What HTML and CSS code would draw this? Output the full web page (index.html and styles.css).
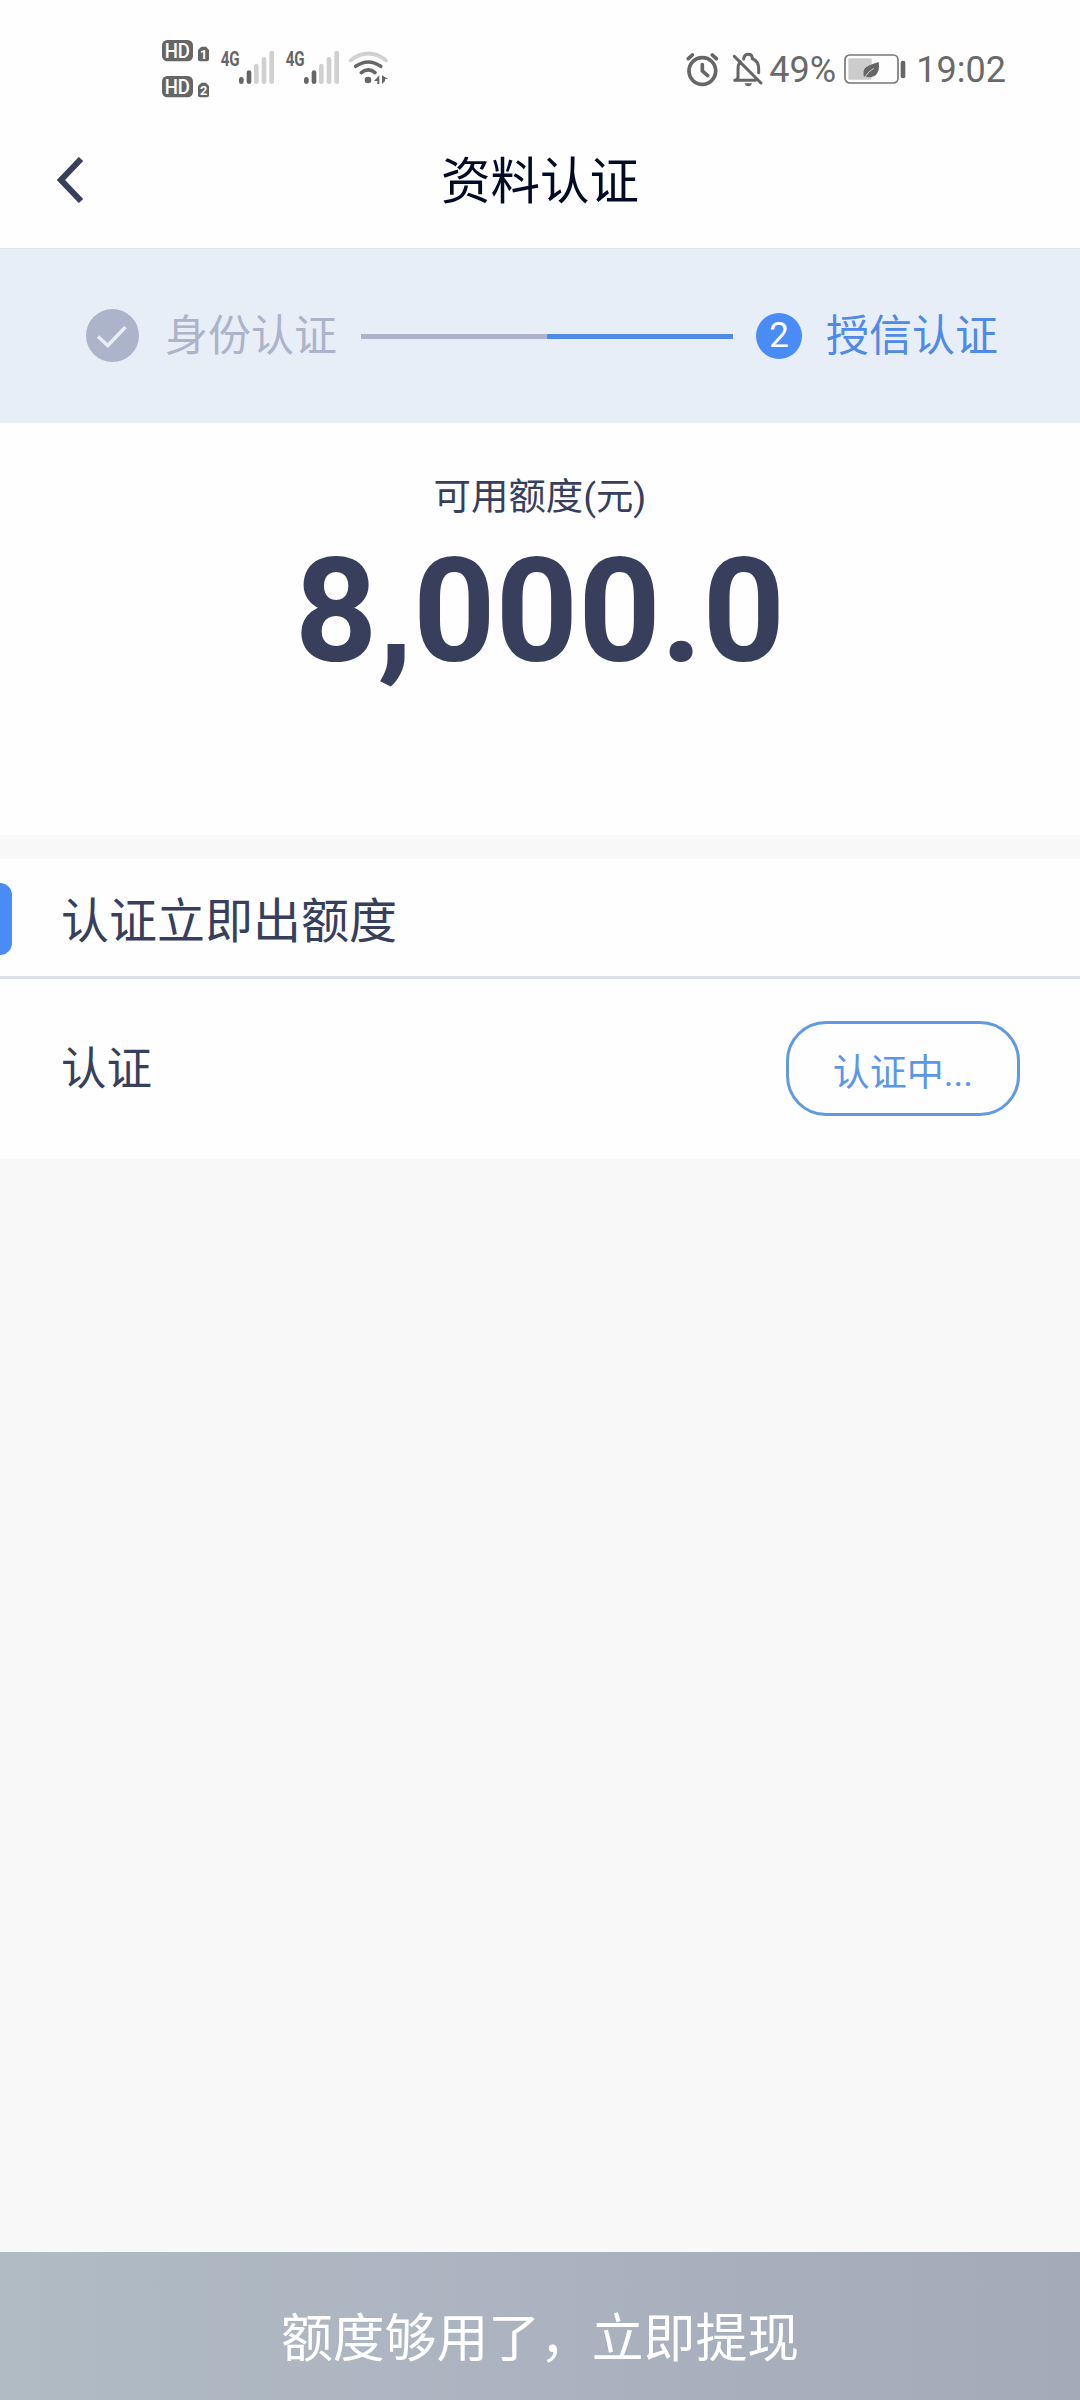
FILE: index.html
```html
<!DOCTYPE html>
<html lang="zh-CN">
<head>
<meta charset="utf-8">
<title>资料认证</title>
<link rel="stylesheet" href="styles.css">
</head>
<body>
<div class="app">
  <div class="status">
    <svg class="signals" viewBox="0 0 810 270" width="270" height="90">
      <g fill="#666">
        <rect x="66" y="60" width="93" height="64" rx="16"/>
        <rect x="66" y="168" width="93" height="64" rx="16"/>
        <path d="M184 80h14l9 10v28q0 6-6 6h-21q-6 0-6-6V90z"/>
        <path d="M184 188h14l9 10v28q0 6-6 6h-21q-6 0-6-6v-28z"/>
      </g>
      <g class="hd" fill="#fff">
        <text x="74" y="113" textLength="76" lengthAdjust="spacingAndGlyphs">HD</text>
        <text x="74" y="221" textLength="76" lengthAdjust="spacingAndGlyphs">HD</text>
      </g>
      <g class="sim" fill="#fff">
        <text x="180" y="118">1</text>
        <text x="180" y="226">2</text>
      </g>
      <g class="net" fill="#666">
        <text x="242" y="137" textLength="57" lengthAdjust="spacingAndGlyphs">4G</text>
        <text x="437" y="137" textLength="57" lengthAdjust="spacingAndGlyphs">4G</text>
      </g>
      <g fill="#666">
        <rect x="297" y="171" width="14" height="21" rx="7"/>
        <rect x="320" y="151" width="14" height="41" rx="7"/>
        <rect x="492" y="171" width="14" height="21" rx="7"/>
        <rect x="515" y="151" width="14" height="41" rx="7"/>
      </g>
      <g fill="#d0d0d0">
        <rect x="342" y="131" width="14" height="61" rx="7"/>
        <rect x="365" y="111" width="14" height="81" rx="7"/>
        <rect x="388" y="92" width="14" height="100" rx="7"/>
        <rect x="537" y="131" width="14" height="61" rx="7"/>
        <rect x="560" y="111" width="14" height="81" rx="7"/>
        <rect x="583" y="92" width="14" height="100" rx="7"/>
      </g>
      <g fill="none" stroke-width="11" stroke-linecap="round">
        <path stroke="#d0d0d0" d="M632 121Q685 80 738 121"/>
        <path stroke="#666" d="M647 139Q685 113 722 139M664 158Q685 141 705 158"/>
      </g>
      <g fill="#666">
        <circle cx="684" cy="180" r="10"/>
        <path d="M718 166v26h-6v-9h-10zM726 166l18 11h-9v6l-9 9z"/>
      </g>
    </svg>
    <div class="system">
      <svg viewBox="0 0 240 120" width="80" height="40">
        <g fill="none" stroke="#666" stroke-width="11" stroke-linecap="round">
          <circle cx="49" cy="60" r="40"/>
          <path d="M49 41v19l16 14M7 23L19 12M79 12l12 11"/>
          <path stroke-width="9" d="M145 16l80 80M146 88h62M150 88l6-8V56q0-16 7-24M173 24q2-14 14-14t12 13q19 8 19 30v12"/>
        </g>
        <path fill="#666" d="M176 97h22q-3 9-11 9t-11-9z"/>
      </svg>
      <span class="pct">49%</span>
      <svg class="battery" viewBox="0 0 186 90" width="62" height="30">
        <rect x="3" y="3" width="159" height="84" rx="14" fill="none" stroke="#777" stroke-width="5"/>
        <rect x="13" y="13" width="70" height="64" rx="3" fill="#ccc"/>
        <path fill="#666" d="M104 24q6 46-30 46-6 0-10-4l-4 4q-5-24 7-31 12-8 37-15z"/>
        <path d="M62 70q12-20 28-27" fill="none" stroke="#ccc" stroke-width="3"/>
        <rect x="170" y="20" width="14" height="53" rx="6" fill="#666"/>
      </svg>
      <span class="clock">19:02</span>
    </div>
  </div>

  <header class="navbar">
    <svg class="back" viewBox="0 0 28 46" width="28" height="46"><path d="M24 2L4 23l20 21" fill="none" stroke="#383f5c" stroke-width="6"/></svg>
    <h1 class="title">资料认证</h1>
  </header>

  <div class="steps">
    <svg class="done" viewBox="0 0 53 53" width="53" height="53"><circle cx="26.5" cy="26.5" r="26.5" fill="#abb4c9"/><path d="M12 27.5l9.8 9L39.5 18" fill="none" stroke="#e8eef8" stroke-width="3.4"/></svg>
    <span class="step">身份认证</span>
    <span class="track"></span>
    <span class="num">2</span>
    <span class="step current">授信认证</span>
  </div>

  <section class="quota">
    <div class="quota-label">可用额度(元)</div>
    <div class="amount">8,000.0</div>
  </section>

  <section class="verify">
    <h2 class="verify-title">认证立即出额度</h2>
    <div class="row">
      <span class="name">认证</span>
      <button class="state">认证中...</button>
    </div>
  </section>

  <button class="withdraw">额度够用了，立即提现</button>
</div>
</body>
</html>
```
FILE: styles.css
```css
* { box-sizing: border-box; }
body {
  margin: 0;
  font-family: Roboto, "Noto Sans CJK SC", sans-serif;
  color: #373f5d;
}
button { font-family: inherit; }
svg { display: block; flex: none; }
.app {
  width: 1080px;
  height: 2400px;
  display: flex;
  flex-direction: column;
  background: #f8f8f8;
}
.status {
  height: 112px;
  padding: 20px 74px 0 140px;
  background: #fefefe;
  display: flex;
  justify-content: space-between;
  align-items: flex-start;
}
.signals { font-family: Roboto, sans-serif; }
.hd { font-size: 58px; font-weight: 500; }
.sim { font-size: 38px; font-weight: 700; }
.net { font-size: 60px; font-weight: 700; }
.system {
  height: 60px;
  padding-top: 28px;
  display: flex;
  align-items: flex-start;
  font-size: 36px;
  line-height: 42px;
  color: #6a6a6a;
}
.system > svg:first-child { margin-top: 3px; }
.pct { width: 69px; margin: 1px 0 0 3px; }
.battery { margin: 6px 10px 0 6px; }
.clock { margin-top: 1px; }
.navbar {
  height: 137px;
  padding: 0 57px;
  background: #fefefe;
  border-bottom: 1px solid #e2e5ea;
  display: grid;
  grid-template-columns: 28px 1fr 28px;
  align-items: center;
}
.title {
  margin: 0;
  padding-top: 3px;
  text-align: center;
  font-size: 49.5px;
  line-height: 72px;
  font-weight: 400;
  color: #020b25;
}
.steps {
  height: 174px;
  padding: 0 80px 0 86px;
  background: #e8eef8;
  display: flex;
  align-items: center;
}
.done { margin-bottom: 1px; }
.step {
  width: 172px;
  margin-left: 26px;
  font-size: 43px;
  line-height: 60px;
  color: #abb4c9;
  white-space: nowrap;
}
.current { color: #4f8ae6; margin-left: 24px; }
.track {
  width: 372px;
  height: 5px;
  margin: 1px 23px 0 24px;
  background: linear-gradient(90deg, #abb4c9 50%, #4f8ae6 50%);
}
.num {
  width: 46px;
  height: 46px;
  border-radius: 50%;
  background: #4a8cf5;
  color: #fff;
  font-size: 35px;
  line-height: 45px;
  text-align: center;
}
.quota {
  height: 412px;
  padding-top: 46px;
  background: #fefefe;
  text-align: center;
}
.quota-label { font-size: 37.4px; line-height: 56px; }
.amount { padding-top: 3px; font-size: 144px; line-height: 168px; font-weight: 700; }
.verify {
  height: 300px;
  margin-top: 24px;
  background: #fefefe;
}
.verify-title {
  height: 120px;
  margin: 0;
  padding-bottom: 2px;
  display: flex;
  align-items: center;
  border-bottom: 3px solid #dcdfe4;
  font-size: 48px;
  font-weight: 400;
}
.verify-title::before {
  content: "";
  width: 12px;
  height: 72px;
  margin: 5px 49px 0 0;
  border-radius: 0 12px 12px 0;
  background: #4a8cf5;
}
.row {
  height: 180px;
  padding: 0 60px 1px 61px;
  display: flex;
  justify-content: space-between;
  align-items: center;
}
.name { padding-bottom: 7px; font-size: 45.5px; }
.state {
  width: 234px;
  height: 95px;
  padding: 3px 0 0;
  border: 3px solid #6199e2;
  border-radius: 40px;
  background: none;
  color: #5b97e6;
  font-size: 37px;
}
.withdraw {
  height: 148px;
  margin-top: auto;
  padding: 16px 0 0;
  border: 0;
  background: linear-gradient(90deg, #b0bbc4, #abb3c0 50%, #a4aab7);
  color: #fff;
  font-size: 51.8px;
}
```
